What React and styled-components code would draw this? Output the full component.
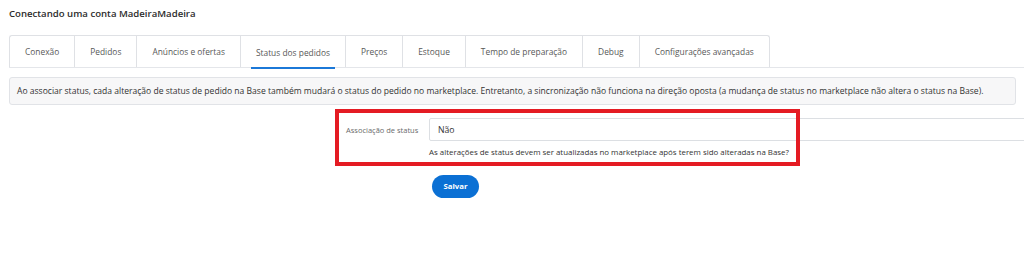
import styled, { createGlobalStyle } from 'styled-components'

const GlobalStyle = createGlobalStyle`
  html, body {
    margin: 0;
    padding: 0;
    background: #ffffff;
    overflow: hidden;
  }
  body {
    font-family: "Open Sans", "Noto Sans", sans-serif;
    color: #333333;
  }
`

const tabs = [
  'Conexão',
  'Pedidos',
  'Anúncios e ofertas',
  'Status dos pedidos',
  'Preços',
  'Estoque',
  'Tempo de preparação',
  'Debug',
  'Configurações avançadas',
]

export default function App() {
  return (
    <Page>
      <GlobalStyle />
      <Title>Conectando uma conta MadeiraMadeira</Title>
      <TabBar>
        {tabs.map((t, i) => (
          <Tab key={t} $last={i === tabs.length - 1}>
            <TabLabel $active={i === 3}>{t}</TabLabel>
          </Tab>
        ))}
      </TabBar>
      <InfoBox>
        Ao associar status, cada alteração de status de pedido na Base também mudará o status do pedido no marketplace. Entretanto, a sincronização não funciona na direção oposta (a mudança de status no marketplace não altera o status na Base).
      </InfoBox>
      <FormArea>
        <Highlight />
        <FieldRow>
          <FieldLabel>Associação de status</FieldLabel>
          <FieldBody>
            <Select>Não</Select>
            <Hint>As alterações de status devem ser atualizadas no marketplace após terem sido alteradas na Base?</Hint>
          </FieldBody>
        </FieldRow>
        <Actions>
          <SaveButton>Salvar</SaveButton>
        </Actions>
      </FormArea>
    </Page>
  )
}

const Page = styled.div`
  width: 1024px;
  height: 254px;
  padding: 7px 8px 0 9px;
  box-sizing: border-box;
`

const Title = styled.div`
  font-size: 9.6px;
  line-height: 14px;
  font-weight: 600;
  color: #2b2b2b;
`

const TabBar = styled.div`
  display: flex;
  margin-top: 14px;
  margin-right: -8px;
  border-bottom: 1px solid #e4e6ea;
`

const Tab = styled.div`
  height: 31px;
  display: flex;
  align-items: center;
  padding: 0 15px;
  border: 1px solid #dfe1e5;
  border-bottom: none;
  border-right: ${p => (p.$last ? '1px solid #dfe1e5' : 'none')};
  border-radius: ${p => (p.$last ? '0 3px 0 0' : '0')};
  background: #ffffff;
  &:first-child {
    border-top-left-radius: 3px;
  }
`

const TabLabel = styled.span`
  font-size: 8.4px;
  color: #585858;
  white-space: nowrap;
  padding: 0 5px;
  margin: 0 -5px;
  display: flex;
  align-items: center;
  box-sizing: border-box;
  border-bottom: 2px solid ${p => (p.$active ? '#1b78d8' : 'transparent')};
  margin-bottom: ${p => (p.$active ? '-2px' : '0')};
  height: ${p => (p.$active ? 'calc(100% + 2px)' : '100%')};
  padding-top: 2px;
`

const InfoBox = styled.div`
  margin-top: 9px;
  height: 28px;
  box-sizing: border-box;
  display: flex;
  align-items: center;
  padding: 0 7px;
  background: #f7f7f8;
  border: 1px solid #e1e3e7;
  border-radius: 3px;
  font-size: 8.55px;
  color: #333333;
  white-space: nowrap;
`

const FormArea = styled.div`
  position: relative;
  padding-top: 13px;
  padding-left: 337px;
`

const Highlight = styled.div`
  position: absolute;
  left: 326px;
  top: 4px;
  width: 465px;
  height: 57px;
  box-sizing: border-box;
  border: 4px solid #e41b23;
  pointer-events: none;
`

const FieldRow = styled.div`
  display: flex;
  align-items: flex-start;
`

const FieldLabel = styled.div`
  flex-shrink: 0;
  width: 83px;
  height: 23px;
  display: flex;
  align-items: center;
  font-size: 7.5px;
  color: #6b6b6b;
  white-space: nowrap;
`

const FieldBody = styled.div`
  flex-shrink: 0;
  display: flex;
  flex-direction: column;
`

const Select = styled.div`
  width: 640px;
  height: 23px;
  box-sizing: border-box;
  border: 1px solid #dcdfe3;
  border-radius: 2px;
  display: flex;
  align-items: center;
  padding-left: 8px;
  font-size: 8.7px;
  color: #333333;
`

const Hint = styled.div`
  margin-top: 5px;
  font-size: 7.9px;
  line-height: 12px;
  color: #333333;
  white-space: nowrap;
`

const Actions = styled.div`
  padding-left: 86px;
  margin-top: 14px;
`

const SaveButton = styled.button`
  width: 47px;
  height: 23px;
  border: none;
  border-radius: 12px;
  background: #0b70d4;
  color: #ffffff;
  font-family: "Open Sans", sans-serif;
  font-size: 7.8px;
  font-weight: 700;
  padding: 0;
`
